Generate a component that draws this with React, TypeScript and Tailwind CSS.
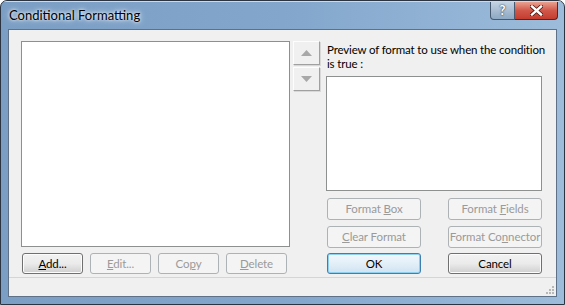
import React from 'react';

const font = { fontFamily: 'Lato, "Liberation Sans", sans-serif' };

type BtnProps = {
    children: React.ReactNode;
    variant?: 'normal' | 'disabled' | 'default';
    className?: string;
};

function Button({ children, variant = 'normal', className = '' }: BtnProps) {
    const look =
        variant === 'disabled'
            ? 'border-[#adb2b5] bg-[#f4f4f4] text-[#9a9a9a]'
            : variant === 'default'
                ? 'border-[#3c7fb1] bg-gradient-to-b from-[#f2f8fc] via-[#e3eff8] to-[#cfe3f1] text-black shadow-[inset_0_0_0_1px_#8fd0f0]'
                : 'border-[#707070] bg-gradient-to-b from-[#f2f2f2] via-[#ebebeb] to-[#cfcfcf] text-black shadow-[inset_0_0_0_1px_#fcfcfc]';
    return (
        <div
            className={`flex items-center justify-center whitespace-nowrap rounded-[3px] border text-[11.5px] leading-none tracking-[-0.1px] ${look} ${className}`}
        >
            {children}
        </div>
    );
}

function ArrowButton({ up }: { up?: boolean }) {
    return (
        <div className="flex h-[24px] w-[27px] items-center justify-center border border-t-[#fdfdfd] border-l-[#fdfdfd] border-r-[#a0a0a0] border-b-[#a0a0a0] bg-[#f0f0f0] shadow-[1px_1px_0_#d8d8d8]">
            <svg width="11" height="6" viewBox="0 0 11 6">
                {up ? (
                    <polygon points="5.5,0 11,6 0,6" fill="#a8a8a8" />
                ) : (
                    <polygon points="0,0 11,0 5.5,6" fill="#a8a8a8" />
                )}
            </svg>
        </div>
    );
}

export default function App() {
    return (
        <div className="h-[305px] w-[565px] bg-white" style={font}>
            <div className="flex h-[305px] w-[565px] flex-col overflow-hidden rounded-t-[7px] border border-[#2b3440] bg-gradient-to-r from-[#7b9ec4] via-[#82a6cc] to-[#9dbcdb]">
                {/* Title bar */}
                <div className="flex h-[28px] shrink-0 items-start justify-between border-t border-[#c9dbec] pl-[8px] pr-[6px]">
                    <div className="pt-[4px] text-[13px] text-black [text-shadow:0_0_6px_#ffffff,0_0_3px_#ffffff]">
                        Conditional Formatting
                    </div>
                    <div className="flex">
                        <div className="flex h-[18px] w-[25px] items-center justify-center rounded-bl-[4px] border border-t-0 border-[#46596e] bg-gradient-to-b from-[#c4d3e3] via-[#a8bcd2] to-[#8ea8c4]">
                            <span className="text-[13px] font-bold leading-none text-white [text-shadow:0_0_1px_#33475c,0_0_2px_#33475c]">?</span>
                        </div>
                        <div className="flex h-[18px] w-[43px] items-center justify-center rounded-br-[4px] border border-l-0 border-t-0 border-[#5e2020] bg-gradient-to-b from-[#e8a090] via-[#d0574a] to-[#c43c2e]">
                            <svg width="13" height="11" viewBox="0 0 13 11">
                                <path d="M2 1.5 L11 9.5 M11 1.5 L2 9.5" stroke="#4a1a14" strokeWidth="4" strokeLinecap="square" />
                                <path d="M2 1.5 L11 9.5 M11 1.5 L2 9.5" stroke="#ffffff" strokeWidth="2.4" strokeLinecap="square" />
                            </svg>
                        </div>
                    </div>
                </div>

                {/* Client frame */}
                <div className="flex flex-1 px-[7px] pb-[7px]">
                    <div className="flex flex-1 flex-col border border-[#5f7186] bg-[#f0f0f0]">
                        <div className="flex flex-1 pl-[12px] pt-[11px]">
                            {/* Left column */}
                            <div className="flex w-[269px] flex-col">
                                <div className="h-[206px] border border-[#8e8f8f] bg-white" />
                                <div className="mt-[6px] flex gap-[7px] pl-[1px]">
                                    <Button className="h-[21px] w-[61px]">
                                        <span><span className="underline">A</span>dd...</span>
                                    </Button>
                                    <Button variant="disabled" className="h-[21px] w-[61px]">
                                        <span><span className="underline">E</span>dit...</span>
                                    </Button>
                                    <Button variant="disabled" className="h-[21px] w-[61px]">
                                        <span>Co<span className="underline">p</span>y</span>
                                    </Button>
                                    <Button variant="disabled" className="h-[21px] w-[61px]">
                                        <span><span className="underline">D</span>elete</span>
                                    </Button>
                                </div>
                            </div>

                            {/* Arrow column */}
                            <div className="ml-[3px] flex flex-col gap-[2px]">
                                <ArrowButton up />
                                <ArrowButton />
                            </div>

                            {/* Right column */}
                            <div className="ml-[6px] flex w-[216px] flex-col">
                                <div className="whitespace-nowrap pl-[1px] pt-[2px] text-[11.5px] leading-[14px] tracking-[-0.15px] text-black">
                                    Preview of format to use when the condition
                                    <br />
                                    is true :
                                </div>
                                <div className="mt-[5px] h-[115px] border border-[#8e8f8f] bg-white" />
                                <div className="mt-[7px] flex justify-between pl-[1px]">
                                    <Button variant="disabled" className="h-[22px] w-[94px]">
                                        <span>Format <span className="underline">B</span>ox</span>
                                    </Button>
                                    <Button variant="disabled" className="h-[22px] w-[94px]">
                                        <span>Format <span className="underline">F</span>ields</span>
                                    </Button>
                                </div>
                                <div className="mt-[6px] flex justify-between pl-[1px]">
                                    <Button variant="disabled" className="h-[22px] w-[94px]">
                                        <span><span className="underline">C</span>lear Format</span>
                                    </Button>
                                    <Button variant="disabled" className="h-[22px] w-[94px]">
                                        <span>Format Co<span className="underline">n</span>nector</span>
                                    </Button>
                                </div>
                                <div className="mt-[5px] flex justify-between pl-[1px]">
                                    <Button variant="default" className="h-[21px] w-[94px]">OK</Button>
                                    <Button className="h-[21px] w-[94px]">Cancel</Button>
                                </div>
                            </div>
                        </div>

                        {/* Status strip */}
                        <div className="relative h-[19px] shrink-0 border-t border-[#d5d5d5]">
                            <svg className="absolute bottom-[1px] right-[1px]" width="10" height="10" viewBox="0 0 10 10">
                                <rect x="7" y="1" width="2" height="2" fill="#b8b8b8" />
                                <rect x="4" y="4" width="2" height="2" fill="#b8b8b8" />
                                <rect x="7" y="4" width="2" height="2" fill="#b8b8b8" />
                                <rect x="1" y="7" width="2" height="2" fill="#b8b8b8" />
                                <rect x="4" y="7" width="2" height="2" fill="#b8b8b8" />
                                <rect x="7" y="7" width="2" height="2" fill="#b8b8b8" />
                            </svg>
                        </div>
                    </div>
                </div>
            </div>
        </div>
    );
}
